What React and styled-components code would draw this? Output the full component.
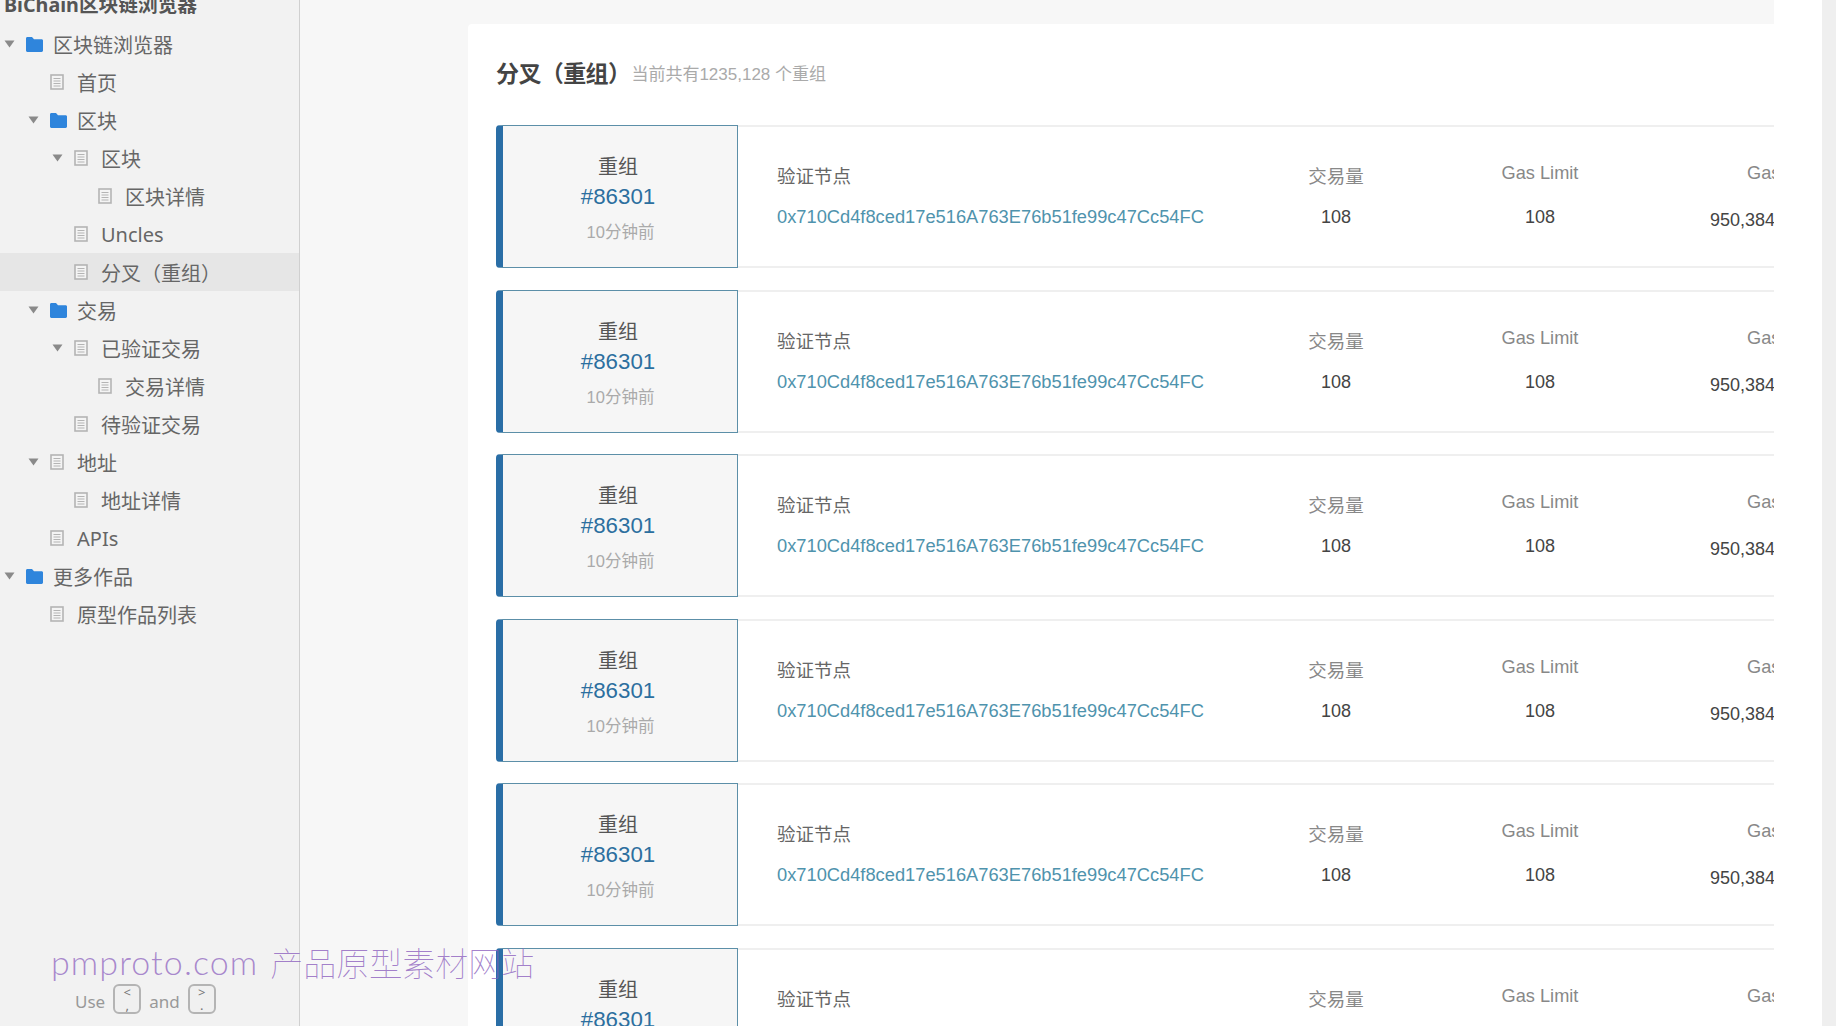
import React from "react";
import styled, { createGlobalStyle } from "styled-components";

const Global = createGlobalStyle`
  html, body { margin: 0; padding: 0; height: 100%; overflow: hidden; background: #fff; }
  #root { height: 100%; }
`;

const Page = styled.div`
  position: relative;
  display: flex;
  width: 100%;
  height: 1026px;
  overflow: hidden;
  font-family: "Liberation Sans", "Noto Sans CJK SC", sans-serif;
`;

const Sidebar = styled.aside`
  flex: 0 0 299px;
  height: 100%;
  box-sizing: content-box;
  overflow: hidden;
  background: #f2f2f2;
  border-right: 1px solid #d0d0d0;
  font-family: "Noto Sans", "Noto Sans CJK SC", sans-serif;
  color: #666;
`;

const Brand = styled.div`
  margin-top: -9px;
  padding-left: 4px;
  height: 28px;
  line-height: 28px;
  font-size: 19.7px;
  font-weight: 700;
  color: #555;
  white-space: nowrap;
`;

const Tree = styled.ul`
  list-style: none;
  margin: 6px 0 0;
  padding: 0;
`;

const TreeRow = styled.li`
  display: flex;
  align-items: center;
  height: 38px;
  padding-left: ${(p) => p.$level * 24 + 4}px;
  background: ${(p) => (p.$selected ? "#e6e6e6" : "transparent")};
  font-size: 20px;
  white-space: nowrap;
`;

const ArrowSlot = styled.span`
  display: flex;
  justify-content: center;
  width: 11px;
  margin-right: 9px;
`;

const IconSlot = styled.span`
  display: flex;
  margin-right: 10px;
  margin-left: 2px;
  width: 17px;
`;

const Main = styled.main`
  flex: 0 0 1474px;
  height: 100%;
  box-sizing: border-box;
  padding: 24px 0 0 168px;
  overflow: hidden;
  background: #f7f7f7;
`;

const Card = styled.section`
  height: 100%;
  padding-left: 28px;
  background: #fff;
  border-radius: 4px 0 0 0;
  overflow: hidden;
`;

const Heading = styled.div`
  display: flex;
  align-items: center;
  height: 101px;
  padding-bottom: 5px;
  box-sizing: border-box;
  white-space: nowrap;
`;

const HeadingTitle = styled.h2`
  margin: 0 1px 0 0;
  font-size: 23px;
  font-weight: 700;
  color: #444;
  font-family: "Noto Sans CJK SC", sans-serif;
  letter-spacing: -0.6px;
`;

const HeadingNote = styled.span`
  font-size: 17px;
  color: #aaa;
`;

const List = styled.div`
  display: flex;
  flex-direction: column;
  gap: 21.5px;
`;

const Fork = styled.article`
  display: flex;
  height: 143px;
  flex: 0 0 143px;
`;

const Badge = styled.div`
  flex: 0 0 242px;
  box-sizing: border-box;
  display: flex;
  flex-direction: column;
  align-items: center;
  padding: 28px 4px 0 0;
  background: #f6f6f6;
  border: 1px solid #5c8fa8;
  border-left: 7px solid #2a6ea6;
  border-radius: 4px 0 0 4px;
`;

const BadgeLabel = styled.div`
  font-size: 20px;
  line-height: 26px;
  color: #555;
`;

const BadgeNumber = styled.div`
  margin-top: 4px;
  font-size: 22.3px;
  line-height: 26px;
  color: #2c6f9f;
`;

const BadgeTime = styled.div`
  margin-top: 10px;
  margin-left: 5px;
  font-size: 16.5px;
  line-height: 24px;
  color: #aaa;
`;

const Details = styled.div`
  flex: 1;
  min-width: 0;
  display: flex;
  box-sizing: border-box;
  border-top: 2px solid #efefef;
  border-bottom: 2px solid #efefef;
  overflow: hidden;
`;

const Cell = styled.div`
  flex: 0 0 ${(p) => p.$width}px;
  display: flex;
  flex-direction: column;
  align-items: ${(p) => p.$align};
  margin-left: ${(p) => p.$left || 0}px;
  white-space: nowrap;
`;

const Label = styled.div`
  margin-top: ${(p) => (p.$latin ? 34 : 38)}px;
  margin-left: ${(p) => p.$indent || 0}px;
  font-size: ${(p) => (p.$latin ? 18.2 : 18.5)}px;
  line-height: 24px;
  color: ${(p) => (p.$tone === "dark" ? "#666" : "#888")};
`;

const Value = styled.div`
  margin-top: ${(p) => p.$gap}px;
  font-size: 18px;
  line-height: 24px;
  color: #444;
`;

const Address = styled(Value)`
  font-size: 18.3px;
  color: #4f93ad;
`;

const Hint = styled.div`
  display: flex;
  align-items: center;
  gap: 8px;
  margin: 351px 0 0 75px;
  font-size: 17px;
  line-height: 30px;
  color: #999;
`;

const HintWord = styled.span`
  padding-top: 6px;
  line-height: 24px;
`;

const Key = styled.span`
  box-sizing: border-box;
  display: flex;
  flex-direction: column;
  align-items: center;
  width: 28px;
  height: 30px;
  font-size: 13px;
  line-height: 13px;
  color: #777;
  background: #f0f0f0;
  border: 2px solid #b4b4b4;
  border-radius: 6px;
`;

const HintMore = styled.div`
  margin: 5px 0 0 124px;
  font-size: 17px;
  line-height: 24px;
  color: #999;
`;

const Gutter = styled.div`
  flex: 1;
  background: #fff;
`;

const Scrollbar = styled.div`
  flex: 0 0 14px;
  background: #efefef;
`;

const Watermark = styled.div`
  position: absolute;
  left: 51px;
  top: 942px;
  display: flex;
  gap: 12px;
  font-family: "Noto Sans CJK SC", sans-serif;
  font-size: 33px;
  font-weight: 100;
  line-height: 40px;
  white-space: nowrap;
  color: rgba(140, 95, 190, 0.8);
`;

const WatermarkLatin = styled.span`
  font-family: "Lato", sans-serif;
  font-size: 34px;
  font-weight: 300;
  letter-spacing: 1.1px;
  color: rgba(140, 95, 190, 0.72);
`;

const Arrow = () => (
  <svg width="11" height="8" viewBox="0 0 11 8">
    <polygon points="0.5,0.5 10.5,0.5 5.5,7.5" fill="#8a8a8a" />
  </svg>
);

const Folder = () => (
  <svg width="17" height="15" viewBox="0 0 17 15">
    <path d="M0 1.5C0 .7.6 0 1.4 0H6l2 2.2h7.6c.8 0 1.4.6 1.4 1.4v10c0 .8-.6 1.4-1.4 1.4H1.4C.6 15 0 14.4 0 13.6z" fill="#2f85dc" />
  </svg>
);

const Doc = () => (
  <svg width="14" height="16" viewBox="0 0 14 16">
    <rect x="1" y="1" width="12" height="14" fill="#f4f4f4" stroke="#b4b4b4" strokeWidth="1.6" />
    <path d="M3.5 4.5h7M3.5 7h7M3.5 9.5h7M3.5 12h7" stroke="#b4b4b4" strokeWidth="1" />
  </svg>
);

const tree = [
  { l: 0, t: "区块链浏览器", folder: true, arrow: true },
  { l: 1, t: "首页" },
  { l: 1, t: "区块", folder: true, arrow: true },
  { l: 2, t: "区块", arrow: true },
  { l: 3, t: "区块详情" },
  { l: 2, t: "Uncles" },
  { l: 2, t: "分叉（重组）", selected: true },
  { l: 1, t: "交易", folder: true, arrow: true },
  { l: 2, t: "已验证交易", arrow: true },
  { l: 3, t: "交易详情" },
  { l: 2, t: "待验证交易" },
  { l: 1, t: "地址", arrow: true },
  { l: 2, t: "地址详情" },
  { l: 1, t: "APIs" },
  { l: 0, t: "更多作品", folder: true, arrow: true },
  { l: 1, t: "原型作品列表" },
];

const forks = [0, 1, 2, 3, 4, 5];

export default function App() {
  return (
    <Page>
      <Global />
      <Sidebar>
        <Brand>BiChain区块链浏览器</Brand>
        <Tree>
          {tree.map((n, i) => (
            <TreeRow key={i} $level={n.l} $selected={n.selected}>
              <ArrowSlot>{n.arrow && <Arrow />}</ArrowSlot>
              <IconSlot>{n.folder ? <Folder /> : <Doc />}</IconSlot>
              {n.t}
            </TreeRow>
          ))}
        </Tree>
        <Hint>
          <HintWord>Use</HintWord>
          <Key>
            <span>&lt;</span>
            <span>,</span>
          </Key>
          <HintWord>and</HintWord>
          <Key>
            <span>&gt;</span>
            <span>.</span>
          </Key>
        </Hint>
        <HintMore>to</HintMore>
      </Sidebar>
      <Main>
        <Card>
          <Heading>
            <HeadingTitle>分叉（重组）</HeadingTitle>
            <HeadingNote>当前共有1235,128 个重组</HeadingNote>
          </Heading>
          <List>
            {forks.map((k) => (
              <Fork key={k}>
                <Badge>
                  <BadgeLabel>重组</BadgeLabel>
                  <BadgeNumber>#86301</BadgeNumber>
                  <BadgeTime>10分钟前</BadgeTime>
                </Badge>
                <Details>
                  <Cell $width={457} $left={39} $align="flex-start">
                    <Label $tone="dark">验证节点</Label>
                    <Address $gap={16}>0x710Cd4f8ced17e516A763E76b51fe99c47Cc54FC</Address>
                  </Cell>
                  <Cell $width={204} $align="center">
                    <Label>交易量</Label>
                    <Value $gap={16}>108</Value>
                  </Cell>
                  <Cell $width={204} $align="center">
                    <Label $latin>Gas Limit</Label>
                    <Value $gap={20}>108</Value>
                  </Cell>
                  <Cell $width={200} $left={68} $align="flex-start">
                    <Label $latin $indent={37}>Gas Used</Label>
                    <Value $gap={23}>950,384</Value>
                  </Cell>
                </Details>
              </Fork>
            ))}
          </List>
        </Card>
      </Main>
      <Gutter />
      <Scrollbar />
      <Watermark>
        <WatermarkLatin>pmproto.com</WatermarkLatin>
        <span>产品原型素材网站</span>
      </Watermark>
    </Page>
  );
}
